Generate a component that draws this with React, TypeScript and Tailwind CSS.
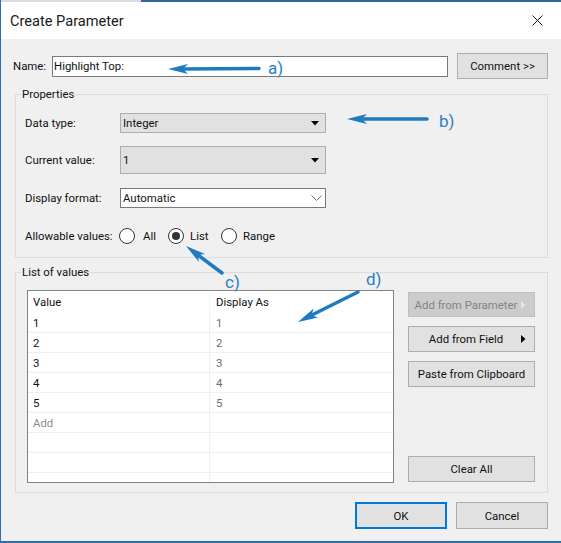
import React from 'react';

const ink = '#1f7bc1';

// arrow drawn from tail to tip, with a swept head
function Arrow({ x1, y1, x2, y2 }: { x1: number; y1: number; x2: number; y2: number }) {
    const dx = x2 - x1;
    const dy = y2 - y1;
    const len = Math.hypot(dx, dy);
    const ux = dx / len;
    const uy = dy / len;
    const px = -uy;
    const py = ux;
    const headLen = 20;
    const half = 5;
    const bx = x2 - ux * headLen;
    const by = y2 - uy * headLen;
    const nx = x2 - ux * (headLen - 5);
    const ny = y2 - uy * (headLen - 5);
    const pts = [
        [x2, y2],
        [bx + px * half, by + py * half],
        [nx, ny],
        [bx - px * half, by - py * half],
    ]
        .map((p) => p.join(','))
        .join(' ');
    return (
        <g>
            <line x1={x1} y1={y1} x2={nx} y2={ny} stroke={ink} strokeWidth={3.5} strokeLinecap="round" />
            <polygon points={pts} fill={ink} />
        </g>
    );
}

const DownTriangle = ({ color = '#000' }: { color?: string }) => (
    <svg width="8" height="5" viewBox="0 0 8 5">
        <polygon points="0,0 8,0 4,4.5" fill={color} />
    </svg>
);

const RightTriangle = ({ color = '#000' }: { color?: string }) => (
    <svg width="5" height="8" viewBox="0 0 5 8">
        <polygon points="0,0 4.5,4 0,8" fill={color} />
    </svg>
);

const Chevron = () => (
    <svg width="11" height="6" viewBox="0 0 11 6">
        <polyline points="0.5,0.5 5.5,5.5 10.5,0.5" fill="none" stroke="#6d6d6d" strokeWidth="1" />
    </svg>
);

const Radio = ({ checked = false }: { checked?: boolean }) => (
    <div className="w-[16px] h-[16px] rounded-full border border-[#333] bg-white flex items-center justify-center shrink-0">
        {checked && <div className="w-[8px] h-[8px] rounded-full bg-[#333]"></div>}
    </div>
);

const rows = [
    { value: '1', display: '1' },
    { value: '2', display: '2' },
    { value: '3', display: '3' },
    { value: '4', display: '4' },
    { value: '5', display: '5' },
];

export default function App() {
    return (
        <div className="relative w-[561px] h-[543px] bg-[#f0f0f0] border-l border-b-2 border-[#2f6dab] flex flex-col text-[11.4px] leading-[18px] text-[#111] font-[family-name:Roboto,'Liberation_Sans',sans-serif] overflow-hidden">
            {/* top edge of the window behind */}
            <div className="flex h-[2px] shrink-0">
                <div className="w-[140px] bg-[#d9dde3]"></div>
                <div className="flex-1 bg-[#35649a]"></div>
            </div>

            {/* Title bar */}
            <div className="h-[37px] shrink-0 bg-white flex items-center justify-between pl-[9px] pr-[18px]">
                <span className="text-[14.6px] leading-[20px] text-[#1a1a1a]">Create Parameter</span>
                <svg width="11" height="11" viewBox="0 0 11 11">
                    <path d="M0.5 0.5 L10.5 10.5 M10.5 0.5 L0.5 10.5" stroke="#111" strokeWidth="1" />
                </svg>
            </div>

            {/* Name */}
            <div className="flex items-center mt-[14px] ml-[12px]">
                <span className="w-[39px]">Name:</span>
                <div className="w-[396px] h-[21px] bg-white border border-[#7a7a7a] flex items-center px-[1px]">Highlight Top:</div>
                <button className="ml-[9px] w-[91px] h-[26px] bg-[#e1e1e1] border border-[#adadad]">Comment &gt;&gt;</button>
            </div>

            {/* Properties */}
            <fieldset className="mt-[6px] ml-[14px] w-[533px] border border-[#dcdcdc] pl-[9px] pr-0 pt-[10px] pb-[13px]">
                <legend className="ml-[-4px] px-[1px]">Properties</legend>

                <div className="flex items-center h-[20px]">
                    <span className="w-[95px]">Data type:</span>
                    <div className="w-[206px] h-[20px] bg-[#e1e1e1] border border-[#adadad] flex items-center justify-between pl-[2px] pr-[6px]">
                        <span>Integer</span>
                        <DownTriangle />
                    </div>
                </div>

                <div className="flex items-center h-[28px] mt-[13px]">
                    <span className="w-[95px]">Current value:</span>
                    <div className="w-[206px] h-[28px] bg-[#e1e1e1] border border-[#adadad] flex items-center justify-between pl-[2px] pr-[6px]">
                        <span>1</span>
                        <DownTriangle />
                    </div>
                </div>

                <div className="flex items-center h-[20px] mt-[14px]">
                    <span className="w-[95px]">Display format:</span>
                    <div className="w-[206px] h-[20px] bg-white border border-[#7a7a7a] flex items-center justify-between pl-[2px] pr-[3px]">
                        <span>Automatic</span>
                        <Chevron />
                    </div>
                </div>

                <div className="flex items-center h-[16px] mt-[20px]">
                    <span className="w-[94px]">Allowable values:</span>
                    <div className="w-[49px] flex items-center gap-[8px]">
                        <Radio />
                        <span>All</span>
                    </div>
                    <div className="w-[53px] flex items-center gap-[6px]">
                        <Radio checked />
                        <span>List</span>
                    </div>
                    <div className="flex items-center gap-[6px]">
                        <Radio />
                        <span>Range</span>
                    </div>
                </div>
            </fieldset>

            {/* List of values */}
            <fieldset className="mt-[5px] ml-[14px] w-[533px] border border-[#dcdcdc] pl-[11px] pr-[12px] pt-[9px] pb-[9px]">
                <legend className="ml-[-6px] px-[1px]">List of values</legend>
                <div className="flex">
                    <div className="w-[367px] h-[193px] bg-white border border-[#828282] overflow-hidden">
                        <div className="flex h-[22px] items-center">
                            <div className="w-[182px] h-full pl-[5px] flex items-center border-r border-[#f4f4f4]">Value</div>
                            <div className="flex-1 pl-[6px]">Display As</div>
                        </div>
                        {rows.map((r) => (
                            <div key={r.value} className="flex h-[20px] border-b border-[#f0f0f0]">
                                <div className="w-[182px] pl-[5px] flex items-center border-r border-[#f0f0f0]">{r.value}</div>
                                <div className="flex-1 pl-[6px] flex items-center text-[#6d6d6d]">{r.display}</div>
                            </div>
                        ))}
                        <div className="flex h-[20px] border-b border-[#f0f0f0]">
                            <div className="w-[182px] pl-[5px] flex items-center border-r border-[#f0f0f0] text-[#8c8c8c]">Add</div>
                            <div className="flex-1"></div>
                        </div>
                        {[0, 1, 2].map((i) => (
                            <div key={i} className="flex h-[20px] border-b border-[#f0f0f0]">
                                <div className="w-[182px] border-r border-[#f0f0f0]"></div>
                                <div className="flex-1"></div>
                            </div>
                        ))}
                    </div>

                    <div className="ml-[14px] w-[127px] flex flex-col pt-[2px] pb-[1px]">
                        <button className="h-[25px] bg-[#cccccc] border border-[#bfbfbf] flex items-center text-[#838383]">
                            <span className="flex-1 text-center pl-[2px]">Add from Parameter</span>
                            <span className="pr-[8px] flex"><RightTriangle color="#e8e8e8" /></span>
                        </button>
                        <button className="mt-[9px] h-[26px] bg-[#e1e1e1] border border-[#adadad] flex items-center">
                            <span className="flex-1 text-center pl-[2px]">Add from Field</span>
                            <span className="pr-[8px] flex"><RightTriangle /></span>
                        </button>
                        <button className="mt-[9px] h-[26px] bg-[#e1e1e1] border border-[#adadad]">Paste from Clipboard</button>
                        <button className="mt-auto h-[26px] bg-[#e1e1e1] border border-[#adadad]">Clear All</button>
                    </div>
                </div>
            </fieldset>

            {/* Footer */}
            <div className="flex justify-end gap-[9px] mt-[9px] pr-[13px]">
                <button className="w-[92px] h-[27px] bg-[#e1e1e1] border-2 border-[#0078d7]">OK</button>
                <button className="w-[92px] h-[27px] bg-[#e1e1e1] border border-[#adadad]">Cancel</button>
            </div>

            {/* Annotations */}
            <svg className="absolute left-[-1px] top-0 pointer-events-none" width="561" height="543">
                <Arrow x1={259} y1={68.5} x2={168} y2={69} />
                <Arrow x1={427} y1={119} x2={347} y2={119} />
                <Arrow x1={222} y1={273} x2={186} y2={246} />
                <Arrow x1={358} y1={292} x2={298} y2={322} />
            </svg>
            <span className="absolute left-[267px] top-[60px] text-[17px] leading-[17px] text-[#2a80c4]">a)</span>
            <span className="absolute left-[438px] top-[113px] text-[17px] leading-[17px] text-[#2a80c4]">b)</span>
            <span className="absolute left-[224px] top-[274px] text-[17px] leading-[17px] text-[#2a80c4]">c)</span>
            <span className="absolute left-[365px] top-[271px] text-[17px] leading-[17px] text-[#2a80c4]">d)</span>
        </div>
    );
}
